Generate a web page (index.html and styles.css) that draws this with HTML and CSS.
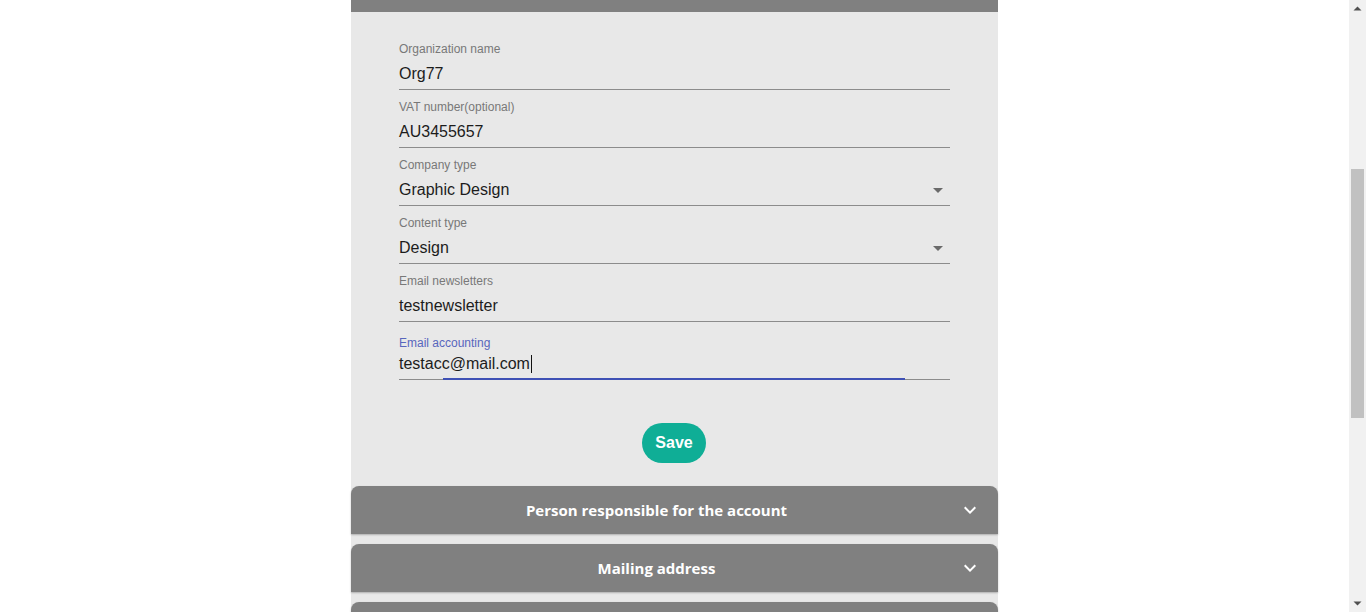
FILE: index.html
```html
<!DOCTYPE html>
<html lang="en">
<head>
<meta charset="utf-8">
<title>Organization</title>
<link rel="stylesheet" href="styles.css">
</head>
<body>
<div class="viewport">
  <main class="page">
    <div class="column">
      <section class="panel expanded">
        <div class="panel-head-stub"></div>
        <form class="form">
          <div class="field">
            <label class="label">Organization name</label>
            <div class="input-row"><span class="value">Org77</span></div>
          </div>
          <div class="field">
            <label class="label">VAT number(optional)</label>
            <div class="input-row"><span class="value">AU3455657</span></div>
          </div>
          <div class="field">
            <label class="label">Company type</label>
            <div class="input-row"><span class="value">Graphic Design</span>
              <svg class="drop" viewBox="0 0 24 24" width="24" height="24"><path d="M7 10l5 5 5-5z"/></svg>
            </div>
          </div>
          <div class="field">
            <label class="label">Content type</label>
            <div class="input-row"><span class="value">Design</span>
              <svg class="drop" viewBox="0 0 24 24" width="24" height="24"><path d="M7 10l5 5 5-5z"/></svg>
            </div>
          </div>
          <div class="field">
            <label class="label">Email newsletters</label>
            <div class="input-row"><span class="value">testnewsletter</span></div>
          </div>
          <div class="field focused">
            <label class="label">Email accounting</label>
            <div class="input-row"><span class="value">testacc@mail.com</span><span class="caret"></span></div>
          </div>
          <div class="actions">
            <button type="button" class="save">Save</button>
          </div>
        </form>
      </section>
      <section class="panel collapsed first">
        <div class="panel-head">
          <span class="panel-title">Person responsible for the account</span>
          <span class="chev"><svg viewBox="0 0 24 24" width="24" height="24"><path d="M7.4 8.6L12 13.2l4.6-4.6L18 10l-6 6-6-6z"/></svg></span>
        </div>
      </section>
      <section class="panel collapsed">
        <div class="panel-head">
          <span class="panel-title">Mailing address</span>
          <span class="chev"><svg viewBox="0 0 24 24" width="24" height="24"><path d="M7.4 8.6L12 13.2l4.6-4.6L18 10l-6 6-6-6z"/></svg></span>
        </div>
      </section>
      <section class="panel collapsed">
        <div class="panel-head">
          <span class="panel-title"></span>
          <span class="chev"></span>
        </div>
      </section>
    </div>
  </main>
  <div class="scrollbar">
    <div class="sb-btn"><svg viewBox="0 0 17 17" width="17" height="17"><path d="M4.5 10.5h8l-4-4z"/></svg></div>
    <div class="sb-track">
      <div class="sb-thumb"></div>
    </div>
    <div class="sb-btn"><svg viewBox="0 0 17 17" width="17" height="17"><path d="M4.5 6.5h8l-4 4z"/></svg></div>
  </div>
</div>
</body>
</html>
```
FILE: styles.css
```css
* { box-sizing: border-box; }
html, body { margin: 0; padding: 0; height: 612px; overflow: hidden; background: #fff; }
body { font-family: "Liberation Sans", Arial, sans-serif; }

.viewport { display: flex; height: 612px; }
.page { flex: 1; display: flex; justify-content: center; overflow: hidden; }
.column { width: 647px; background: #e8e8e8; display: flex; flex-direction: column; }

.panel { background: #e8e8e8; border-radius: 0 0 4px 4px; flex-shrink: 0; }
.panel.collapsed { margin-top: 10px; }
.panel.collapsed.first { margin-top: 0; }
.panel-head-stub { height: 12px; background: #808080; }

.form { padding: 20px 48px 23px 48px; display: flex; flex-direction: column; }
.field { position: relative; padding-top: 10px; border-bottom: 1px solid #8c8c8c; padding-bottom: 6px; }
.label { display: block; font-size: 12px; line-height: 14px; color: #787878; margin-bottom: 8px; }
.input-row { display: flex; align-items: center; height: 19px; position: relative; }
.value { font-size: 16px; line-height: 19px; color: #1c1c1c; }
.drop { position: absolute; right: 0; top: -2px; fill: #6a6a6a; }

.field.focused .label { padding-top: 4px; margin-bottom: 4px; color: #5866bd; }
.field.focused::after { content: ""; position: absolute; left: 44px; right: 45px; bottom: -1px; height: 2px; background: #3f51b5; }
.caret { display: inline-block; width: 1px; height: 18px; background: #111; margin-left: 1px; }

.actions { display: flex; justify-content: center; padding-top: 43px; }
.save { width: 64px; height: 40px; border: 0; border-radius: 20px; background: #0fae96; color: #fff; font-family: "Liberation Sans", Arial, sans-serif; font-size: 16px; font-weight: 700; padding: 0; margin-right: 1px; }

.panel-head { height: 48px; background: #808080; border-radius: 8px 8px 0 0; display: flex; align-items: center; padding: 0 16px; box-shadow: 0 1px 2px rgba(0,0,0,0.25); }
.panel-title { flex: 1; text-align: center; color: #fff; font-family: "Open Sans", sans-serif; font-weight: 700; font-size: 15px; }
.chev { width: 48px; height: 48px; margin-right: -12px; display: flex; align-items: center; justify-content: center; }
.chev svg { fill: #fff; }

.scrollbar { width: 17px; background: #f1f1f1; display: flex; flex-direction: column; }
.sb-btn { height: 17px; }
.sb-btn svg { display: block; fill: #505050; }
.sb-track { flex: 1; padding: 152px 2px 0 2px; }
.sb-thumb { height: 249px; background: #c1c1c1; }
```
